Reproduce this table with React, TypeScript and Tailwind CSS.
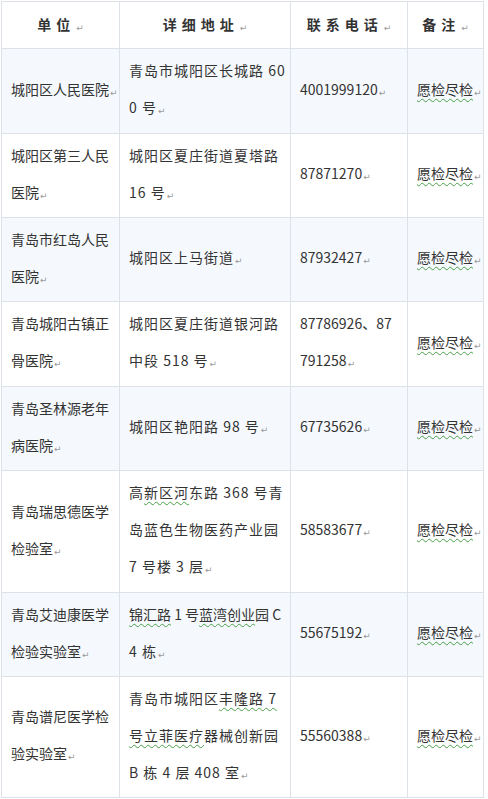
import React from "react";

type Row = {
  name: string[];
  addr: React.ReactNode[];
  phone: string[];
  h: string;
  blue: boolean;
};

function Wavy({ children }: { children: React.ReactNode }) {
  return (
    <span className="underline decoration-wavy decoration-[#4a9f4a] decoration-1 underline-offset-[3px]">
      {children}
    </span>
  );
}

function Ret() {
  return (
    <span className="ml-px align-[-1px] text-[9px] tracking-normal text-[#9a9a9a] [font-family:'DejaVu_Sans',sans-serif]">
      ↵
    </span>
  );
}

const rows: Row[] = [
  {
    name: ["城阳区人民医院"],
    addr: ["青岛市城阳区长城路 60", "0 号"],
    phone: ["4001999120"],
    h: "h-[85px]",
    blue: true,
  },
  {
    name: ["城阳区第三人民", "医院"],
    addr: ["城阳区夏庄街道夏塔路", "16 号"],
    phone: ["87871270"],
    h: "h-[84px]",
    blue: false,
  },
  {
    name: ["青岛市红岛人民", "医院"],
    addr: ["城阳区上马街道"],
    phone: ["87932427"],
    h: "h-[84px]",
    blue: true,
  },
  {
    name: ["青岛城阳古镇正", "骨医院"],
    addr: ["城阳区夏庄街道银河路", "中段 518 号"],
    phone: ["87786926、87", "791258"],
    h: "h-[85px]",
    blue: false,
  },
  {
    name: ["青岛圣林源老年", "病医院"],
    addr: ["城阳区艳阳路 98 号"],
    phone: ["67735626"],
    h: "h-[84px]",
    blue: true,
  },
  {
    name: ["青岛瑞思德医学", "检验室"],
    addr: [
      <>
        高<Wavy>新区河</Wavy>东路 368 号青
      </>,
      "岛蓝色生物医药产业园",
      "7 号楼 3 层",
    ],
    phone: ["58583677"],
    h: "h-[122px]",
    blue: false,
  },
  {
    name: ["青岛艾迪康医学", "检验实验室"],
    addr: [
      <span className="tracking-normal">
        <Wavy>锦汇路</Wavy> 1 号<Wavy>蓝湾创业</Wavy>园 C
      </span>,
      "4 栋",
    ],
    phone: ["55675192"],
    h: "h-[84px]",
    blue: true,
  },
  {
    name: ["青岛谱尼医学检", "验实验室"],
    addr: [
      <>
        青岛市城阳区<Wavy>丰隆路 7</Wavy>
      </>,
      <>
        <Wavy>号立菲医疗</Wavy>器械创新园
      </>,
      "B 栋 4 层 408 室",
    ],
    phone: ["55560388"],
    h: "h-[121px]",
    blue: false,
  },
];

function Lines({ lines }: { lines: React.ReactNode[] }) {
  return (
    <div>
      {lines.map((l, i) => (
        <div key={i} className="whitespace-nowrap">
          {l}
          {i === lines.length - 1 && <Ret />}
        </div>
      ))}
    </div>
  );
}

export default function App() {
  const cell = "flex items-center border-r border-b border-[#dde2e8] leading-[37px]";
  return (
    <div className="min-h-[799px] bg-white pl-px pt-px text-[14px] text-[#333] [font-family:'Noto_Sans_CJK_SC','Noto_Sans',sans-serif]">
      <div className="grid w-[483px] grid-cols-[118px_171px_117px_76px] border-l border-t border-[#dde2e8]">
        {["单位", "详细地址", "联系电话", "备注"].map((t) => (
          <div
            key={t}
            className="flex h-[47px] items-center justify-center border-r border-b border-[#dde2e8] bg-white font-bold tracking-[5px]"
          >
            <span>
              {t}
              <span className="font-normal">
                <Ret />
              </span>
            </span>
          </div>
        ))}
        {rows.map((r, i) => {
          const bg = r.blue ? "bg-[#f5f9fd]" : "bg-white";
          return (
            <React.Fragment key={i}>
              <div className={`${cell} ${r.h} ${bg} pl-[9px]`}>
                <Lines lines={r.name} />
              </div>
              <div className={`${cell} ${r.h} ${bg} pl-[9px] tracking-[1px]`}>
                <Lines lines={r.addr} />
              </div>
              <div className={`${cell} ${r.h} ${bg} pl-[9px]`}>
                <Lines lines={r.phone} />
              </div>
              <div className={`${cell} ${r.h} ${bg} pl-[9px]`}>
                <div className="whitespace-nowrap">
                  <Wavy>愿检尽检</Wavy>
                  <Ret />
                </div>
              </div>
            </React.Fragment>
          );
        })}
      </div>
    </div>
  );
}
